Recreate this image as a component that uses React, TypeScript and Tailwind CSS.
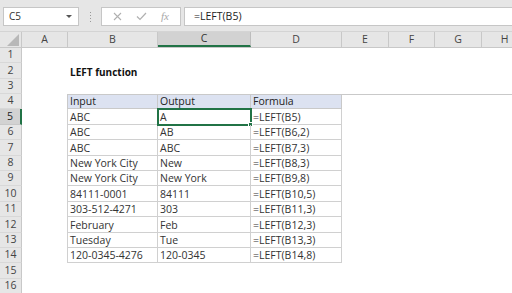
const cols = [
  { name: "A", w: 46 },
  { name: "B", w: 90 },
  { name: "C", w: 93 },
  { name: "D", w: 91 },
  { name: "E", w: 47 },
  { name: "F", w: 46 },
  { name: "G", w: 47 },
  { name: "H", w: 46 },
];

const rowHeights = [15, 16, 15, 15, 16, 15, 16, 15, 15, 16, 15, 16, 15, 15, 16, 15];

const data: [string, string, string][] = [
  ["ABC", "A", "=LEFT(B5)"],
  ["ABC", "AB", "=LEFT(B6,2)"],
  ["ABC", "ABC", "=LEFT(B7,3)"],
  ["New York City", "New", "=LEFT(B8,3)"],
  ["New York City", "New York", "=LEFT(B9,8)"],
  ["84111-0001", "84111", "=LEFT(B10,5)"],
  ["303-512-4271", "303", "=LEFT(B11,3)"],
  ["February", "Feb", "=LEFT(B12,3)"],
  ["Tuesday", "Tue", "=LEFT(B13,3)"],
  ["120-0345-4276", "120-0345", "=LEFT(B14,8)"],
];

const font = { fontFamily: "'Open Sans', 'Liberation Sans', sans-serif" };

function FormulaBar() {
  return (
    <div className="h-[32px] bg-[#e6e6e6] flex items-start pt-[7px] pl-[3px] border-b border-[#d4d4d4]">
      <div className="w-[76px] h-[19px] bg-white border border-[#c6c6c6] flex items-center justify-between pl-[5px] pr-[6px]">
        <span className="text-[10px] text-[#333]">C5</span>
        <span className="w-0 h-0 border-l-[3px] border-r-[3px] border-t-[3px] border-l-transparent border-r-transparent border-t-[#555]" />
      </div>
      <div className="w-[22px] h-[19px] flex flex-col items-center justify-center gap-[2px]">
        <span className="w-[1px] h-[1px] bg-[#999]" />
        <span className="w-[1px] h-[1px] bg-[#999]" />
        <span className="w-[1px] h-[1px] bg-[#999]" />
        <span className="w-[1px] h-[1px] bg-[#999]" />
      </div>
      <div className="w-[80px] h-[19px] bg-white border border-[#c6c6c6] flex items-center justify-around px-[4px]">
        <svg width="9" height="9" viewBox="0 0 9 9">
          <path d="M1 1L8 8M8 1L1 8" stroke="#b0b0b0" strokeWidth="1.1" fill="none" />
        </svg>
        <svg width="11" height="9" viewBox="0 0 11 9">
          <path d="M1 4.5L4 7.5L10 1" stroke="#b0b0b0" strokeWidth="1.2" fill="none" />
        </svg>
        <span className="text-[11px] italic text-[#a8a8a8]" style={{ fontFamily: "'Liberation Serif', serif" }}>
          fx
        </span>
      </div>
      <div className="ml-[3px] flex-1 h-[19px] bg-white border border-[#c6c6c6] border-r-0 flex items-center pl-[9px]">
        <span className="text-[10.5px] text-[#222]">=LEFT(B5)</span>
      </div>
    </div>
  );
}

function ColumnHeaders() {
  return (
    <div className="flex h-[16px] bg-[#e6e6e6] border-b border-[#c8c8c8]">
      <div className="w-[22px] shrink-0 border-r border-[#c8c8c8] relative">
        <svg className="absolute right-[2px] bottom-[1px]" width="12" height="12" viewBox="0 0 12 12">
          <path d="M12 0L12 12L0 12Z" fill="#b8b8b8" />
        </svg>
      </div>
      {cols.map((c) => (
        <div
          key={c.name}
          style={{ width: c.w }}
          className={
            c.name === "C"
              ? "shrink-0 flex items-center justify-center text-[10.5px] text-[#333] bg-[#d2d2d2] border-r border-[#bdbdbd] border-b-2 border-b-[#217346]"
              : "shrink-0 flex items-center justify-center text-[10.5px] text-[#444] border-r border-[#c8c8c8]"
          }
        >
          {c.name}
        </div>
      ))}
    </div>
  );
}

function Cell({
  w,
  text,
  kind,
}: {
  w: number;
  text?: string;
  kind: "none" | "head" | "body";
}) {
  if (kind === "none") return <div style={{ width: w }} className="shrink-0" />;
  return (
    <div
      style={{ width: w }}
      className={
        kind === "head"
          ? "shrink-0 h-full bg-[#dce2f1] border-r border-b border-[#c9c9c9] flex items-end pl-[2px] text-[10.5px] text-[#222] leading-[14px]"
          : "shrink-0 h-full border-r border-b border-[#d0d0d0] flex items-end pl-[2px] text-[10.5px] text-[#333] leading-[14px]"
      }
    >
      {text}
    </div>
  );
}

function Row({ n, h }: { n: number; h: number }) {
  const selected = n === 5;
  let content: React.ReactNode = null;
  if (n === 2) {
    content = (
      <div className="pl-[2px] flex items-end h-full text-[10px] font-bold text-[#111] leading-[14px]">
        LEFT function
      </div>
    );
  } else if (n === 4 || (n >= 5 && n <= 14)) {
    const kind = n === 4 ? "head" : "body";
    const vals = n === 4 ? ["Input", "Output", "Formula"] : data[n - 5];
    content = (
      <div className={n === 4 ? "flex h-full border-l border-t border-[#c9c9c9] -ml-[1px]" : "flex h-full border-l border-[#d0d0d0] -ml-[1px]"}>
        <Cell w={90} text={vals[0]} kind={kind} />
        <div className="relative shrink-0">
          <Cell w={93} text={vals[1]} kind={kind} />
          {selected && (
            <div className="absolute -left-[1px] -top-[1px] w-[95px] h-[18px] border-2 border-[#217346]">
              <div className="absolute -right-[3px] -bottom-[3px] w-[5px] h-[5px] bg-[#217346] border border-white" />
            </div>
          )}
        </div>
        <Cell w={91} text={vals[2]} kind={kind} />
      </div>
    );
  }
  return (
    <div className="flex" style={{ height: h }}>
      <div
        className={
          selected
            ? "w-[22px] shrink-0 bg-[#d2d2d2] border-r-2 border-r-[#217346] border-b border-[#c8c8c8] flex items-center justify-center text-[10.5px] text-[#222]"
            : "w-[22px] shrink-0 bg-[#e6e6e6] border-r border-[#c8c8c8] border-b border-b-[#d8d8d8] flex items-center justify-center text-[10.5px] text-[#444]"
        }
      >
        {n}
      </div>
      <div className="w-[46px] shrink-0" />
      <div className="flex-1">{content}</div>
    </div>
  );
}

export default function App() {
  return (
    <div className="w-[512px] h-[293px] overflow-hidden bg-white select-none" style={font}>
      <FormulaBar />
      <ColumnHeaders />
      {rowHeights.map((h, i) => (
        <Row key={i} n={i + 1} h={h} />
      ))}
    </div>
  );
}
